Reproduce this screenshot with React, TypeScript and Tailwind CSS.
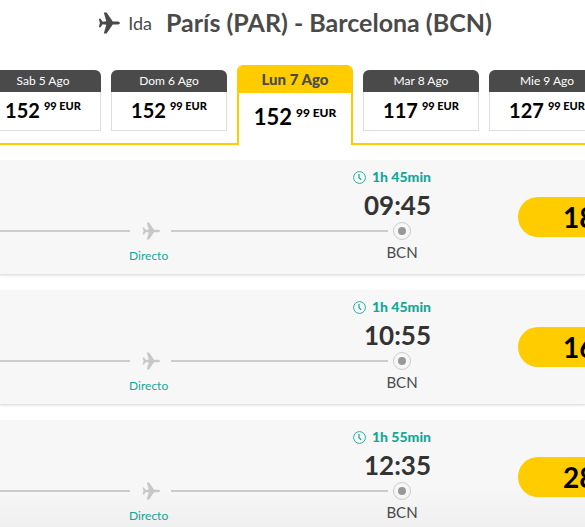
import React from 'react'

const days = [
  { label: 'Sab 5 Ago', price: '152', active: false },
  { label: 'Dom 6 Ago', price: '152', active: false },
  { label: 'Lun 7 Ago', price: '152', active: true },
  { label: 'Mar 8 Ago', price: '117', active: false },
  { label: 'Mie 9 Ago', price: '127', active: false },
]

const flights = [
  { duration: '1h 45min', arrival: '09:45', price: '18' },
  { duration: '1h 45min', arrival: '10:55', price: '16' },
  { duration: '1h 55min', arrival: '12:35', price: '28' },
]

const PlaneIcon: React.FC<{ className?: string }> = ({ className }) => (
  <svg viewBox="0 0 22 22" fill="currentColor" className={className} aria-hidden="true">
    <path d="M22 11c0 .9-1.300 1.500-3 1.500h-4.200L8.600 21.500H5.800l2.500-8.800-3.600-.4-2.200 2.900H.8L1.900 11 .8 6.800h1.700l2.200 2.900 3.600-.4L5.800.5h2.800l6.200 9H19c1.700 0 3 .6 3 1.500z" />
  </svg>
)

const ClockIcon: React.FC = () => (
  <svg viewBox="0 0 13 13" fill="none" stroke="currentColor" className="w-[13px] h-[13px]" aria-hidden="true">
    <circle cx="6.500" cy="6.500" r="5.900" strokeWidth="0.900" />
    <path d="M6 3v3.700l2.200 2.100" strokeWidth="1.200" />
  </svg>
)

const DayTab: React.FC<{ label: string; price: string; active: boolean }> = ({ label, price, active }) => (
  <button
    type="button"
    aria-pressed={active}
    className={`shrink-0 w-[116px] flex flex-col overflow-hidden ${
      active ? 'h-20 -mb-0.5 rounded-t-md border-x-2 border-[#ffcc00] bg-white' : 'h-[61px] mb-3 rounded-t-md'
    }`}
  >
    <span
      className={`w-full ${
        active ? 'h-7 leading-7 text-[15px] font-black bg-[#ffcc00] text-[#4a4a4a]' : 'h-[22px] leading-[22px] text-xs bg-[#4a4a4a] text-white'
      }`}
    >
      {label}
    </span>
    <span
      className={`w-full flex-1 flex justify-center gap-1 font-black text-black ${
        active ? 'pt-3' : 'pt-1.5 border border-t-0 border-[#dddddd]'
      }`}
    >
      <span className={active ? 'text-[22px] leading-6 font-bold' : 'text-xl leading-6 font-bold'}>{price}</span>
      <span className={active ? 'text-xs leading-4' : 'text-[11px] leading-4'}>99 EUR</span>
    </span>
  </button>
)

const FlightRow: React.FC<{ duration: string; arrival: string; price: string }> = ({ duration, arrival, price }) => (
  <li className="flex h-[115px] bg-[#f7f7f7] border-b border-[#e4e4e4] shadow-[0_1px_2px_rgba(0,0,0,0.1)]">
    <div className="flex-1 pt-2">
      <div className="flex items-center justify-end gap-1.5 h-[18px] text-sm font-black text-[#14a797]">
        <ClockIcon />
        <span>{duration}</span>
      </div>
      <div className="h-9 leading-[38px] text-right text-[26px] font-bold text-[#333333]">{arrival}</div>

      {/* Route line */}
      <div className="grid grid-cols-[3fr_41px_5fr_28px] items-center pr-[15px]">
        <div className="h-0.5 bg-[#cccccc]" />
        <PlaneIcon className="w-[18px] h-[18px] mx-auto text-[#c8c8c8]" />
        <div className="h-0.5 bg-[#cccccc]" />
        <div className="w-[18px] h-[18px] mx-auto rounded-full border border-[#cccccc] flex items-center justify-center">
          <div className="w-2 h-2 rounded-full bg-[#999999]" />
        </div>
        <div className="col-start-2 pt-1.5 pr-1 flex justify-center text-xs leading-5 text-[#14a797]">Directo</div>
        <div className="col-start-4 self-start pt-0.5 flex justify-center text-[15px] leading-5 text-[#4a4a4a]">BCN</div>
      </div>
    </div>

    <div className="w-[154px] pl-[87px] pt-[37px]">
      <button type="button" className="w-[150px] h-10 pl-[45px] rounded-full bg-[#ffcc00] text-left text-[28px] leading-9 font-bold text-black">
        {price}
      </button>
    </div>
  </li>
)

const App: React.FC = () => (
  <main className="h-screen overflow-hidden bg-white font-['Lato',sans-serif]">
    <header className="flex items-center justify-center h-[65px] pl-[5px] pb-5 text-[#4a4a4a]">
      <PlaneIcon className="w-[22px] h-[22px]" />
      <span className="ml-2 text-lg">Ida</span>
      <h1 className="ml-3.5 text-[25px] font-bold">París (PAR) - Barcelona (BCN)</h1>
    </header>

    <nav className="flex justify-center items-end gap-2.5 pl-[5px] border-b-2 border-[#ffcc00]">
      {days.map((day) => (
        <DayTab key={day.label} {...day} />
      ))}
    </nav>

    <ul className="mt-[15px] flex flex-col gap-[15px]">
      {flights.map((flight) => (
        <FlightRow key={flight.arrival} {...flight} />
      ))}
    </ul>

    {/* Fade at the foot of the window */}
    <div className="fixed bottom-0 inset-x-0 h-10 pointer-events-none bg-linear-to-b from-transparent to-black/3" />
  </main>
)

export default App
